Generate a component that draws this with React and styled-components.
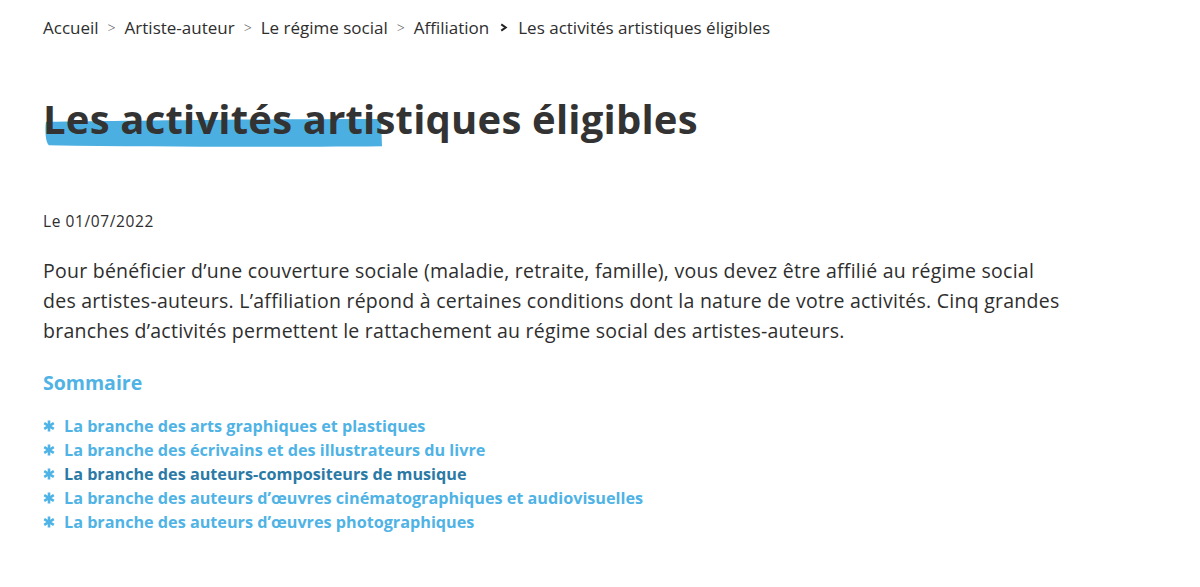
import styled, { createGlobalStyle } from 'styled-components'

const GlobalStyle = createGlobalStyle`
  html, body {
    margin: 0;
    padding: 0;
    background: #fff;
  }
  body {
    font-family: "Open Sans", Lato, "Liberation Sans", sans-serif;
    color: #2e2e2e;
  }
`

const crumbs = ['Accueil', 'Artiste-auteur', 'Le régime social', 'Affiliation']

const summary = [
  { label: 'La branche des arts graphiques et plastiques' },
  { label: 'La branche des écrivains et des illustrateurs du livre' },
  { label: 'La branche des auteurs-compositeurs de musique', active: true },
  { label: 'La branche des auteurs d’œuvres cinématographiques et audiovisuelles' },
  { label: 'La branche des auteurs d’œuvres photographiques' },
]

const Star = () => (
  <svg width="12" height="12" viewBox="0 0 12 12" aria-hidden="true">
    <g stroke="#4fb3e5" strokeWidth="2.6" strokeLinecap="butt">
      <line x1="6" y1="0.5" x2="6" y2="11.5" />
      <line x1="1.2" y1="3.2" x2="10.8" y2="8.8" />
      <line x1="1.2" y1="8.8" x2="10.8" y2="3.2" />
    </g>
  </svg>
)

const App = () => {
  return (
    <Page>
      <GlobalStyle />
      <Breadcrumb>
        {crumbs.map((c, i) => (
          <Crumb key={c}>
            <CrumbLink>{c}</CrumbLink>
            {i === crumbs.length - 1 ? (
              <Chevron viewBox="0 0 10 10" aria-hidden="true">
                <path d="M2.5 1.5 L7.5 5 L2.5 8.5" fill="none" stroke="#222" strokeWidth="2.2" />
              </Chevron>
            ) : (
              <Sep>&gt;</Sep>
            )}
          </Crumb>
        ))}
        <Crumb>Les activités artistiques éligibles</Crumb>
      </Breadcrumb>

      <Title>
        <Brush viewBox="0 0 340 32" preserveAspectRatio="none" aria-hidden="true">
          <path
            d="M1 3 C 80 2, 220 0, 338 0 L 339 29 C 240 30, 120 30, 4 28 C 0 24, 0 10, 1 3 Z"
            fill="#4bafe2"
          />
        </Brush>
        <TitleText>Les activités artistiques éligibles</TitleText>
      </Title>

      <Date>Le 01/07/2022</Date>

      <Intro>
        Pour bénéficier d’une couverture sociale (maladie, retraite, famille), vous devez être affilié au régime social
        <br />
        des artistes-auteurs. L’affiliation répond à certaines conditions dont la nature de votre activités. Cinq grandes
        <br />
        branches d’activités permettent le rattachement au régime social des artistes-auteurs.
      </Intro>

      <SummaryTitle>Sommaire</SummaryTitle>
      <SummaryList>
        {summary.map(s => (
          <SummaryItem key={s.label}>
            <Star />
            <SummaryLink $active={s.active}>{s.label}</SummaryLink>
          </SummaryItem>
        ))}
      </SummaryList>
    </Page>
  )
}

const Page = styled.div`
  padding: 16px 43px 40px 43px;
`

const Breadcrumb = styled.nav`
  display: flex;
  align-items: center;
  font-size: 17px;
  color: #2e2e2e;
`

const Crumb = styled.span`
  display: flex;
  align-items: center;
`

const CrumbLink = styled.span``

const Sep = styled.span`
  margin: 0 9px;
  font-size: 14px;
  font-weight: 300;
  color: #555;
`

const Chevron = styled.svg`
  width: 9px;
  height: 9px;
  margin: 0 10px 0 10px;
`

const Title = styled.h1`
  position: relative;
  margin: 53px 0 0 0;
  font-size: 40px;
  font-weight: 700;
  line-height: 54px;
  color: #333;
  letter-spacing: 0.2px;
`

const Brush = styled.svg`
  position: absolute;
  left: 2px;
  top: 27px;
  width: 338px;
  height: 30px;
`

const TitleText = styled.span`
  position: relative;
`

const Date = styled.div`
  margin-top: 64px;
  font-size: 15.5px;
  letter-spacing: 0.6px;
  color: #2e2e2e;
`

const Intro = styled.p`
  margin: 24px 0 0 0;
  max-width: 1060px;
  font-size: 19.5px;
  letter-spacing: 0.25px;
  line-height: 30px;
  color: #2e2e2e;
`

const SummaryTitle = styled.h2`
  margin: 23px 0 0 0;
  font-size: 19.5px;
  font-weight: 700;
  color: #4fb3e5;
`

const SummaryList = styled.ul`
  list-style: none;
  margin: 18px 0 0 0;
  padding: 0;
`

const SummaryItem = styled.li`
  display: flex;
  align-items: center;
  gap: 9px;
  height: 24px;
`

const SummaryLink = styled.a`
  font-size: 16.2px;
  font-weight: 700;
  color: ${p => (p.$active ? '#2b7aa6' : '#4fb3e5')};
  cursor: pointer;
`

export default App
